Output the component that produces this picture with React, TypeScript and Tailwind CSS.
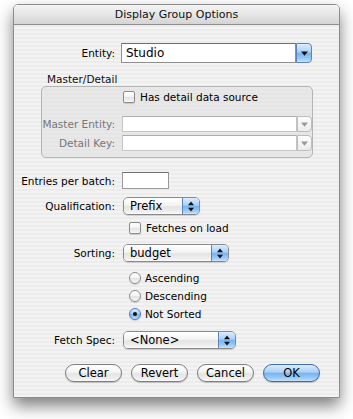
import type { ReactNode } from "react"

const aquaBlue =
	"bg-[linear-gradient(to_bottom,#dcecfc_0%,#a9d0f7_45%,#78b4f0_52%,#96c9f7_80%,#c6e4fd_100%)]"
const aquaWhite =
	"bg-[linear-gradient(to_bottom,#ffffff_0%,#f4f4f4_45%,#e4e4e4_55%,#efefef_85%,#fbfbfb_100%)]"

function Label({ children, w = "w-[101px]", dim = false }: { children: ReactNode; w?: string; dim?: boolean }) {
	return (
		<div className={`${w} shrink-0 text-right whitespace-nowrap ${dim ? "text-[#777]" : "text-black"}`}>
			{children}
		</div>
	)
}

function DownTriangle({ color = "#111" }: { color?: string }) {
	return (
		<svg width="7" height="5" viewBox="0 0 7 5">
			<path d="M0 0.5h7L3.5 4.8z" fill={color} />
		</svg>
	)
}

function UpDown() {
	return (
		<svg width="6" height="11" viewBox="0 0 6 11">
			<path d="M3 0.5L6 4.2H0z" fill="#111" />
			<path d="M0 6.8h6L3 10.5z" fill="#111" />
		</svg>
	)
}

function ComboBox({ value, width }: { value: string; width: string }) {
	return (
		<div className={`${width} h-[20px] flex`}>
			<div className="flex-1 h-full bg-white border border-[#8f8f8f] border-t-[#6f6f6f] flex items-center pl-[4px] text-[12px] text-black">
				{value}
			</div>
			<div
				className={`w-[16px] h-full ${aquaBlue} border border-[#5a83ba] rounded-r-[4px] flex items-center justify-center`}>
				<DownTriangle />
			</div>
		</div>
	)
}

function DisabledCombo({ width }: { width: string }) {
	return (
		<div className={`${width} h-[16px] flex`}>
			<div className="flex-1 h-full bg-white border border-[#c4c4c4] border-t-[#adadad]" />
			<div className="w-[15px] h-full bg-[linear-gradient(to_bottom,#fdfdfd,#ececec)] border border-[#bdbdbd] rounded-r-[4px] flex items-center justify-center">
				<DownTriangle color="#9a9a9a" />
			</div>
		</div>
	)
}

function PopUp({ value, width }: { value: string; width: string }) {
	return (
		<div
			className={`${width} h-[18px] flex rounded-[5px] border border-[#8a8a8a] overflow-hidden shadow-[0_1px_1px_rgba(0,0,0,0.15)]`}>
			<div className={`flex-1 h-full ${aquaWhite} flex items-center pl-[6px] text-[11.5px] text-black`}>
				{value}
			</div>
			<div className={`w-[17px] h-full ${aquaBlue} border-l border-[#5a83ba] flex items-center justify-center`}>
				<UpDown />
			</div>
		</div>
	)
}

function CheckBox({ label }: { label: string }) {
	return (
		<div className="flex items-center h-full">
			<div
				className={`w-[12px] h-[12px] rounded-[2px] border border-[#8c8c8c] ${aquaWhite} shadow-[0_1px_1px_rgba(0,0,0,0.15)]`}
			/>
			<span className="ml-[5px] text-black whitespace-nowrap">{label}</span>
		</div>
	)
}

function Radio({ label, checked = false }: { label: string; checked?: boolean }) {
	return (
		<div className="flex items-center h-[14px]">
			<div
				className={`w-[12px] h-[12px] rounded-full border flex items-center justify-center shadow-[0_1px_1px_rgba(0,0,0,0.15)] ${
					checked ? `${aquaBlue} border-[#4f78b0]` : `${aquaWhite} border-[#8c8c8c]`
				}`}>
				{checked && <div className="w-[4px] h-[4px] rounded-full bg-[#111]" />}
			</div>
			<span className="ml-[4px] text-black whitespace-nowrap">{label}</span>
		</div>
	)
}

function PushButton({ label, primary = false }: { label: string; primary?: boolean }) {
	return (
		<div
			className={`w-[57px] h-[18px] rounded-full border flex items-center justify-center text-[11.5px] text-black shadow-[0_1px_1px_rgba(0,0,0,0.2)] ${
				primary ? `${aquaBlue} border-[#3e6aa8]` : `${aquaWhite} border-[#7f7f7f]`
			}`}>
			{label}
		</div>
	)
}

export default function App() {
	return (
		<div className="w-[353px] h-[419px] bg-white pt-[4px] pl-[13px] font-['DejaVu_Sans',sans-serif] text-[10.5px] leading-[14px]">
			<div className="w-[327px] rounded-t-[5px] border border-[#8c8c8c] shadow-[0_8px_16px_rgba(0,0,0,0.5)] overflow-hidden">
				{/* title bar */}
				<div className="h-[20px] bg-[linear-gradient(to_bottom,#f4f4f4_0%,#e6e6e6_50%,#d4d4d4_100%)] border-b border-[#8f8f8f] flex items-center justify-center text-[11px] text-[#111]">
					Display Group Options
				</div>

				{/* body */}
				<div className="h-[372px] flex flex-col pt-[18px] bg-[repeating-linear-gradient(to_bottom,#ececec_0px,#ececec_2px,#f3f3f3_2px,#f3f3f3_4px)]">
					<div className="h-[20px] flex items-center">
						<Label>Entity:</Label>
						<div className="ml-[6px]">
							<ComboBox value="Studio" width="w-[191px]" />
						</div>
					</div>

					<div className="mt-[9px] h-[14px] pl-[33px] text-[#111]">Master/Detail</div>

					<div className="ml-[27px] w-[272px] h-[72px] rounded-[5px] border border-[#b4b4b4] bg-[#e2e2e2]/70 flex flex-col">
						<div className="mt-[3px] h-[14px] pl-[81px]">
							<CheckBox label="Has detail data source" />
						</div>
						<div className="mt-[12px] h-[16px] flex items-center">
							<Label w="w-[73px]" dim>
								Master Entity:
							</Label>
							<div className="ml-[7px]">
								<DisabledCombo width="w-[190px]" />
							</div>
						</div>
						<div className="mt-[3px] h-[16px] flex items-center">
							<Label w="w-[73px]" dim>
								Detail Key:
							</Label>
							<div className="ml-[7px]">
								<DisabledCombo width="w-[190px]" />
							</div>
						</div>
					</div>

					<div className="mt-[14px] h-[17px] flex items-center">
						<Label>Entries per batch:</Label>
						<div className="ml-[7px] w-[47px] h-[17px] bg-white border border-[#9a9a9a] border-t-[#707070]" />
					</div>

					<div className="mt-[8px] h-[18px] flex items-center">
						<Label>Qualification:</Label>
						<div className="ml-[8px]">
							<PopUp value="Prefix" width="w-[77px]" />
						</div>
					</div>

					<div className="mt-[7px] h-[12px] pl-[115px]">
						<CheckBox label="Fetches on load" />
					</div>

					<div className="mt-[10px] h-[18px] flex items-center">
						<Label>Sorting:</Label>
						<div className="ml-[8px]">
							<PopUp value="budget" width="w-[106px]" />
						</div>
					</div>

					<div className="mt-[9px] pl-[115px] flex flex-col gap-[4px]">
						<Radio label="Ascending" />
						<Radio label="Descending" />
						<Radio label="Not Sorted" checked />
					</div>

					<div className="mt-[10px] h-[18px] flex items-center">
						<Label>Fetch Spec:</Label>
						<div className="ml-[8px]">
							<PopUp value="<None>" width="w-[113px]" />
						</div>
					</div>

					<div className="mt-[15px] pl-[51px] flex gap-[9px]">
						<PushButton label="Clear" />
						<PushButton label="Revert" />
						<PushButton label="Cancel" />
						<PushButton label="OK" primary />
					</div>
				</div>
			</div>
		</div>
	)
}
